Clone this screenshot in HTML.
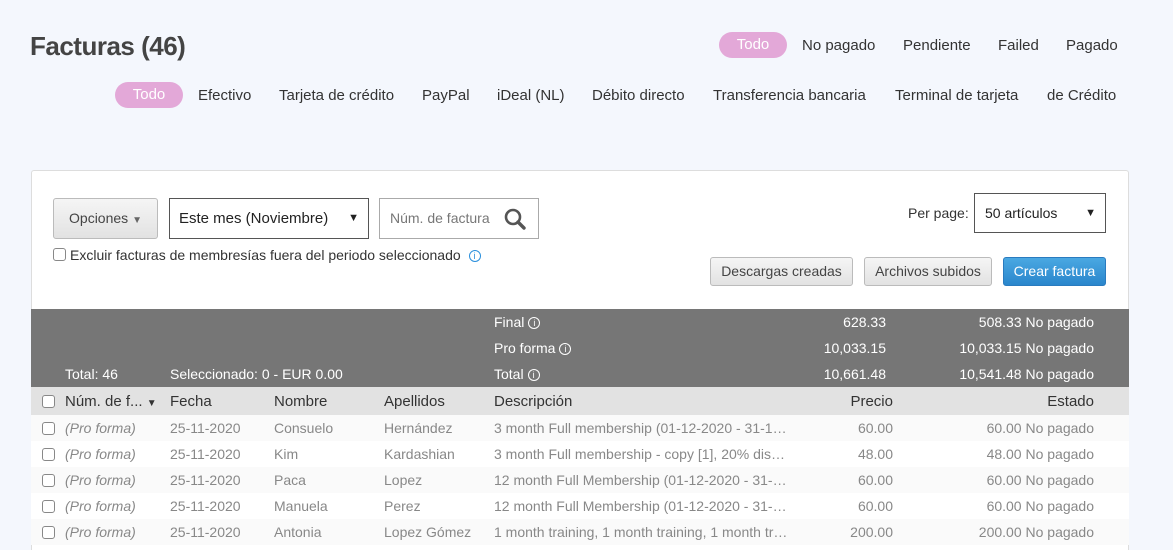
<!DOCTYPE html>
<html><head><meta charset="utf-8"><style>
*{box-sizing:border-box;margin:0;padding:0}
html{width:1173px;height:550px;overflow:hidden}
body{width:1173px;height:550px;overflow:hidden;background:#f4f7fd;font-family:"Liberation Sans",sans-serif;font-size:14px;color:#333;position:relative}
.a{position:absolute;white-space:nowrap}
.pill{background:#e3a8d8;color:#fff;border-radius:13px;height:26px;line-height:26px;text-align:center;font-size:15px}
.panel{position:absolute;left:31px;top:170px;width:1098px;height:380px;background:#fff;border:1px solid #ddd;border-bottom:none;border-radius:3px 3px 0 0}
.btn{position:absolute;height:29px;border:1px solid #bbb;border-radius:3px;background:linear-gradient(#f5f5f5,#e2e2e2);color:#444;line-height:27px;text-align:center;font-size:14px}
.gray{position:absolute;left:31px;top:309px;width:1098px;height:78px;background:#767676;color:#fff}
.hdr{position:absolute;left:31px;top:387px;width:1098px;height:28px;background:#e2e2e2;color:#333;font-size:15px}
.row{position:absolute;left:31px;width:1098px;height:26px;color:#888}
.cb{position:absolute;width:13px;height:13px;border:1px solid #888;border-radius:3px;background:#fff}
.r{text-align:right}
.i{display:inline-block;width:12px;height:12px;border:1px solid currentColor;border-radius:50%;font-size:9px;line-height:10px;text-align:center;vertical-align:1px;margin-left:4px}
</style></head><body>
<div class="a" style="left:30px;top:31px;font-size:26px;font-weight:bold;color:#444;letter-spacing:-0.5px">Facturas (46)</div>
<div class="a pill" style="left:719px;top:32px;width:68px">Todo</div>
<div class="a" style="left:802px;top:37px;font-size:15px">No pagado</div>
<div class="a" style="left:903px;top:37px;font-size:15px">Pendiente</div>
<div class="a" style="left:998px;top:37px;font-size:15px">Failed</div>
<div class="a" style="left:1066px;top:37px;font-size:15px">Pagado</div>
<div class="a pill" style="left:115px;top:82px;width:68px">Todo</div>
<div class="a" style="left:198px;top:87px;font-size:15px">Efectivo</div>
<div class="a" style="left:279px;top:87px;font-size:15px">Tarjeta de crédito</div>
<div class="a" style="left:422px;top:87px;font-size:15px">PayPal</div>
<div class="a" style="left:497px;top:87px;font-size:15px">iDeal (NL)</div>
<div class="a" style="left:592px;top:87px;font-size:15px">Débito directo</div>
<div class="a" style="left:713px;top:87px;font-size:15px">Transferencia bancaria</div>
<div class="a" style="left:895px;top:87px;font-size:15px">Terminal de tarjeta</div>
<div class="a" style="left:1047px;top:87px;font-size:15px">de Crédito</div>
<div class="panel"></div>
<div class="btn" style="left:53px;top:198px;width:105px;height:41px;line-height:39px">Opciones <span style="font-size:10px;color:#666">▼</span></div>
<div class="a" style="left:169px;top:198px;width:200px;height:41px;border:1px solid #555;line-height:39px;padding-left:9px;font-size:15px;color:#222">Este mes (Noviembre)<span style="position:absolute;right:9px;font-size:11px">▼</span></div>
<div class="a" style="left:379px;top:198px;width:160px;height:41px;border:1px solid #aaa;line-height:39px;padding-left:10px;color:#777">Núm. de factura
<svg style="position:absolute;right:12px;top:9px" width="22" height="22" viewBox="0 0 22 22"><circle cx="9" cy="9" r="7" fill="none" stroke="#555" stroke-width="2.6"/><path d="M14 14l6 6" stroke="#555" stroke-width="3.4" stroke-linecap="round"/></svg></div>
<div class="cb" style="left:53px;top:248px"></div>
<div class="a" style="left:70px;top:247px;color:#333">Excluir facturas de membresías fuera del periodo seleccionado <span class="i" style="color:#2a8fdc">i</span></div>
<div class="a" style="left:908px;top:205px">Per page:</div>
<div class="a" style="left:974px;top:193px;width:132px;height:40px;border:1px solid #555;line-height:38px;padding-left:10px;color:#222">50 artículos<span style="position:absolute;right:9px;font-size:11px">▼</span></div>
<div class="btn" style="left:710px;top:257px;width:143px">Descargas creadas</div>
<div class="btn" style="left:864px;top:257px;width:128px">Archivos subidos</div>
<div class="btn" style="left:1003px;top:257px;width:103px;background:linear-gradient(#4aa8e2,#2a86cc);border-color:#2a7bbf;color:#fff">Crear factura</div>
<div class="gray">
<div class="a" style="left:463px;top:5px">Final<span class="i">i</span></div>
<div class="a" style="left:463px;top:31px">Pro forma<span class="i">i</span></div>
<div class="a" style="left:463px;top:57px">Total<span class="i">i</span></div>
<div class="a" style="left:34px;top:57px">Total: 46</div>
<div class="a" style="left:139px;top:57px">Seleccionado: 0 - EUR 0.00</div>
<div class="a r" style="right:243px;top:5px">628.33</div>
<div class="a r" style="right:243px;top:31px">10,033.15</div>
<div class="a r" style="right:243px;top:57px">10,661.48</div>
<div class="a r" style="right:35px;top:5px">508.33 No pagado</div>
<div class="a r" style="right:35px;top:31px">10,033.15 No pagado</div>
<div class="a r" style="right:35px;top:57px">10,541.48 No pagado</div>
</div>
<div class="hdr">
<div class="cb" style="left:11px;top:8px"></div>
<div class="a" style="left:34px;top:6px">Núm. de f... <span style="font-size:10px">▼</span></div>
<div class="a" style="left:139px;top:6px">Fecha</div>
<div class="a" style="left:243px;top:6px">Nombre</div>
<div class="a" style="left:353px;top:6px">Apellidos</div>
<div class="a" style="left:463px;top:6px">Descripción</div>
<div class="a r" style="right:236px;top:6px">Precio</div>
<div class="a r" style="right:35px;top:6px">Estado</div>
</div>
<div class="row" style="top:415px;background:#fafafa"><div class="cb" style="left:11px;top:7px"></div><i class="a" style="left:34px;top:5px">(Pro forma)</i><span class="a" style="left:139px;top:5px">25-11-2020</span><span class="a" style="left:243px;top:5px">Consuelo</span><span class="a" style="left:353px;top:5px">Hernández</span><span class="a" style="left:463px;top:5px">3 month Full membership (01-12-2020 - 31-1…</span><span class="a" style="right:236px;top:5px">60.00</span><span class="a" style="right:35px;top:5px">60.00 No pagado</span></div>
<div class="row" style="top:441px;background:#fff"><div class="cb" style="left:11px;top:7px"></div><i class="a" style="left:34px;top:5px">(Pro forma)</i><span class="a" style="left:139px;top:5px">25-11-2020</span><span class="a" style="left:243px;top:5px">Kim</span><span class="a" style="left:353px;top:5px">Kardashian</span><span class="a" style="left:463px;top:5px">3 month Full membership - copy [1], 20% dis…</span><span class="a" style="right:236px;top:5px">48.00</span><span class="a" style="right:35px;top:5px">48.00 No pagado</span></div>
<div class="row" style="top:467px;background:#fafafa"><div class="cb" style="left:11px;top:7px"></div><i class="a" style="left:34px;top:5px">(Pro forma)</i><span class="a" style="left:139px;top:5px">25-11-2020</span><span class="a" style="left:243px;top:5px">Paca</span><span class="a" style="left:353px;top:5px">Lopez</span><span class="a" style="left:463px;top:5px">12 month Full Membership (01-12-2020 - 31-…</span><span class="a" style="right:236px;top:5px">60.00</span><span class="a" style="right:35px;top:5px">60.00 No pagado</span></div>
<div class="row" style="top:493px;background:#fff"><div class="cb" style="left:11px;top:7px"></div><i class="a" style="left:34px;top:5px">(Pro forma)</i><span class="a" style="left:139px;top:5px">25-11-2020</span><span class="a" style="left:243px;top:5px">Manuela</span><span class="a" style="left:353px;top:5px">Perez</span><span class="a" style="left:463px;top:5px">12 month Full Membership (01-12-2020 - 31-…</span><span class="a" style="right:236px;top:5px">60.00</span><span class="a" style="right:35px;top:5px">60.00 No pagado</span></div>
<div class="row" style="top:519px;background:#fafafa"><div class="cb" style="left:11px;top:7px"></div><i class="a" style="left:34px;top:5px">(Pro forma)</i><span class="a" style="left:139px;top:5px">25-11-2020</span><span class="a" style="left:243px;top:5px">Antonia</span><span class="a" style="left:353px;top:5px">Lopez Gómez</span><span class="a" style="left:463px;top:5px">1 month training, 1 month training, 1 month tr…</span><span class="a" style="right:236px;top:5px">200.00</span><span class="a" style="right:35px;top:5px">200.00 No pagado</span></div>
</body></html>
